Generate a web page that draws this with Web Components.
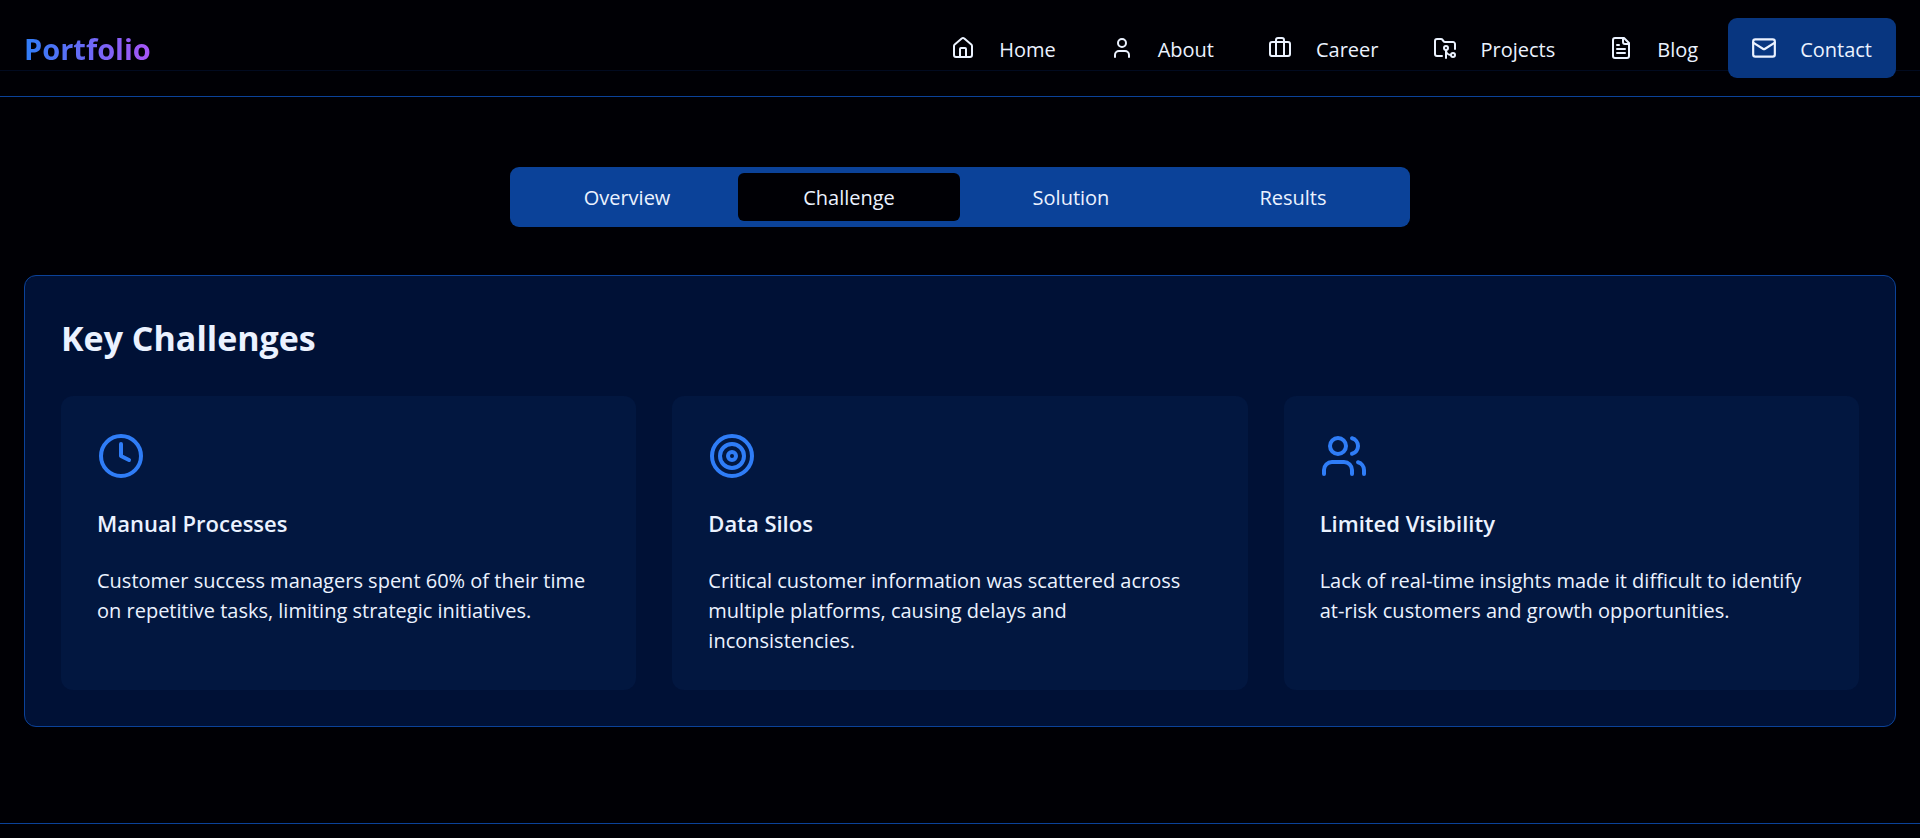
<!DOCTYPE html>
<html lang="en">
<head>
<meta charset="utf-8">
<meta name="viewport" content="width=device-width, initial-scale=1">
<title>Portfolio</title>
<style>
  :root {
    --bg: #000005;
    --line: #0b4299;
    --panel: #001136;
    --card: #021740;
    --text: #ebf2ff;
    --accent: #2f7df7;
  }
  html { background: var(--bg); }
  body {
    margin: 0;
    color: var(--text);
    font: 400 20px/30px "Open Sans", "Noto Sans", sans-serif;
  }
</style>
</head>
<body>
<portfolio-page></portfolio-page>

<script>
const ICONS = {
  home: '<path d="M15 21v-8a1 1 0 0 0-1-1h-4a1 1 0 0 0-1 1v8"/><path d="M3 10a2 2 0 0 1 .709-1.528l7-5.999a2 2 0 0 1 2.582 0l7 5.999A2 2 0 0 1 21 10v9a2 2 0 0 1-2 2H5a2 2 0 0 1-2-2z"/>',
  user: '<path d="M19 21v-2a4 4 0 0 0-4-4H9a4 4 0 0 0-4 4v2"/><circle cx="12" cy="7" r="4"/>',
  briefcase: '<path d="M16 20V4a2 2 0 0 0-2-2h-4a2 2 0 0 0-2 2v16"/><rect width="20" height="14" x="2" y="6" rx="2"/>',
  folder: '<path d="M9 20H4a2 2 0 0 1-2-2V5a2 2 0 0 1 2-2h3.9a2 2 0 0 1 1.69.9l.81 1.2a2 2 0 0 0 1.67.9H20a2 2 0 0 1 2 2v5"/><circle cx="13" cy="12" r="2"/><path d="M18 19c-2.8 0-5-2.2-5-5v8"/><circle cx="20" cy="19" r="2"/>',
  file: '<path d="M15 2H6a2 2 0 0 0-2 2v16a2 2 0 0 0 2 2h12a2 2 0 0 0 2-2V7Z"/><path d="M14 2v4a2 2 0 0 0 2 2h4"/><path d="M10 9H8"/><path d="M16 13H8"/><path d="M16 17H8"/>',
  mail: '<rect width="20" height="16" x="2" y="4" rx="2"/><path d="m22 7-8.97 5.7a1.94 1.94 0 0 1-2.06 0L2 7"/>',
  clock: '<circle cx="12" cy="12" r="10"/><path d="M12 6v6l4 2"/>',
  target: '<circle cx="12" cy="12" r="10"/><circle cx="12" cy="12" r="6"/><circle cx="12" cy="12" r="2"/>',
  users: '<path d="M16 21v-2a4 4 0 0 0-4-4H6a4 4 0 0 0-4 4v2"/><circle cx="9" cy="7" r="4"/><path d="M22 21v-2a4 4 0 0 0-3-3.87"/><path d="M16 3.13a4 4 0 0 1 0 7.75"/>'
};

function define(name, render) {
  customElements.define(name, class extends HTMLElement {
    connectedCallback() {
      if (this.shadowRoot) return;
      this.attachShadow({ mode: 'open' }).innerHTML = render(this);
    }
  });
}

define('line-icon', el => `
  <style>
    :host { display: block; flex: none; width: 24px; height: 24px; }
    svg { display: block; width: 100%; height: 100%; fill: none; stroke: currentColor;
          stroke-width: 2; stroke-linecap: round; stroke-linejoin: round; }
  </style>
  <svg viewBox="0 0 24 24" aria-hidden="true">${ICONS[el.getAttribute('name')]}</svg>`);

define('nav-item', el => `
  <style>
    :host { display: block; }
    a { display: flex; align-items: center; gap: 24px; box-sizing: border-box; height: 60px;
        padding: 0 24px; border-radius: 9px; color: inherit; text-decoration: none; }
    :host([active]) a { background: #083680; }
    :host([active]) line-icon { width: 26px; height: 26px; margin: 0 -1px; }
    span { padding-top: 4px; }
  </style>
  <a href="#${el.getAttribute('icon')}"><line-icon name="${el.getAttribute('icon')}"></line-icon><span><slot></slot></span></a>`);

define('site-header', () => `
  <style>
    :host { display: block; }
    header { display: flex; align-items: center; justify-content: space-between; flex-wrap: wrap;
             min-height: 96px; padding: 0 24px; border-bottom: 1px solid var(--line);
             background: linear-gradient(#010a20, #010a20) 0 70px / 100% 1px no-repeat; }
    .logo { padding-top: 2px; font-size: 29px; line-height: 42px; font-weight: 700; text-decoration: none; color: transparent;
            background: linear-gradient(90deg, #2f7df7, #a855f7); -webkit-background-clip: text; background-clip: text; }
    nav { display: flex; flex-wrap: wrap; gap: 6px; }
  </style>
  <header>
    <a class="logo" href="#home">Portfolio</a>
    <nav aria-label="Main">
      <nav-item icon="home">Home</nav-item>
      <nav-item icon="user">About</nav-item>
      <nav-item icon="briefcase">Career</nav-item>
      <nav-item icon="folder">Projects</nav-item>
      <nav-item icon="file">Blog</nav-item>
      <nav-item icon="mail" active>Contact</nav-item>
    </nav>
  </header>`);

define('tab-bar', () => `
  <style>
    :host { display: block; width: 100%; max-width: 900px; margin: 0 auto; }
    div { display: grid; grid-template-columns: repeat(4, 1fr); padding: 6px; border-radius: 9px; background: var(--line); }
    button { height: 48px; padding: 2px 18px 0; border: 0; border-radius: 6px; background: none;
             color: var(--text); font: inherit; cursor: pointer; }
    button[aria-selected="true"] { background: var(--bg); }
  </style>
  <div role="tablist" aria-label="Case study">
    <button role="tab" aria-selected="false">Overview</button>
    <button role="tab" aria-selected="true">Challenge</button>
    <button role="tab" aria-selected="false">Solution</button>
    <button role="tab" aria-selected="false">Results</button>
  </div>`);

define('challenge-card', el => `
  <style>
    :host { display: block; padding: 36px 36px 34px; border-radius: 12px; background: var(--card); }
    line-icon { width: 48px; height: 48px; margin-bottom: 25px; color: var(--accent); }
    h3 { margin: 0 0 25px; font-size: 22px; line-height: 36px; font-weight: 600; }
    p { margin: 0; }
  </style>
  <line-icon name="${el.getAttribute('icon')}"></line-icon>
  <h3>${el.getAttribute('heading')}</h3>
  <p><slot></slot></p>`);

define('challenge-panel', () => `
  <style>
    :host { display: block; padding: 38px 36px 36px; border: 1px solid var(--line); border-radius: 12px; background: var(--panel); }
    h2 { margin: 0 0 34px; font-size: 34px; line-height: 48px; font-weight: 700; }
    .cards { display: grid; grid-template-columns: repeat(auto-fit, minmax(380px, 1fr)); gap: 36px; }
  </style>
  <h2>Key Challenges</h2>
  <div class="cards"><slot></slot></div>`);

define('portfolio-page', () => `
  <style>
    :host { display: block; }
    main { display: grid; gap: 48px; padding: 70px 24px 96px; }
    footer { height: 14px; border-top: 1px solid var(--line); }
  </style>
  <site-header></site-header>
  <main>
    <tab-bar></tab-bar>
    <challenge-panel>
      <challenge-card icon="clock" heading="Manual Processes">Customer success managers spent 60% of their time on repetitive tasks, limiting strategic initiatives.</challenge-card>
      <challenge-card icon="target" heading="Data Silos">Critical customer information was scattered across multiple platforms, causing delays and inconsistencies.</challenge-card>
      <challenge-card icon="users" heading="Limited Visibility">Lack of real-time insights made it difficult to identify at-risk customers and growth opportunities.</challenge-card>
    </challenge-panel>
  </main>
  <footer></footer>`);
</script>
</body>
</html>
